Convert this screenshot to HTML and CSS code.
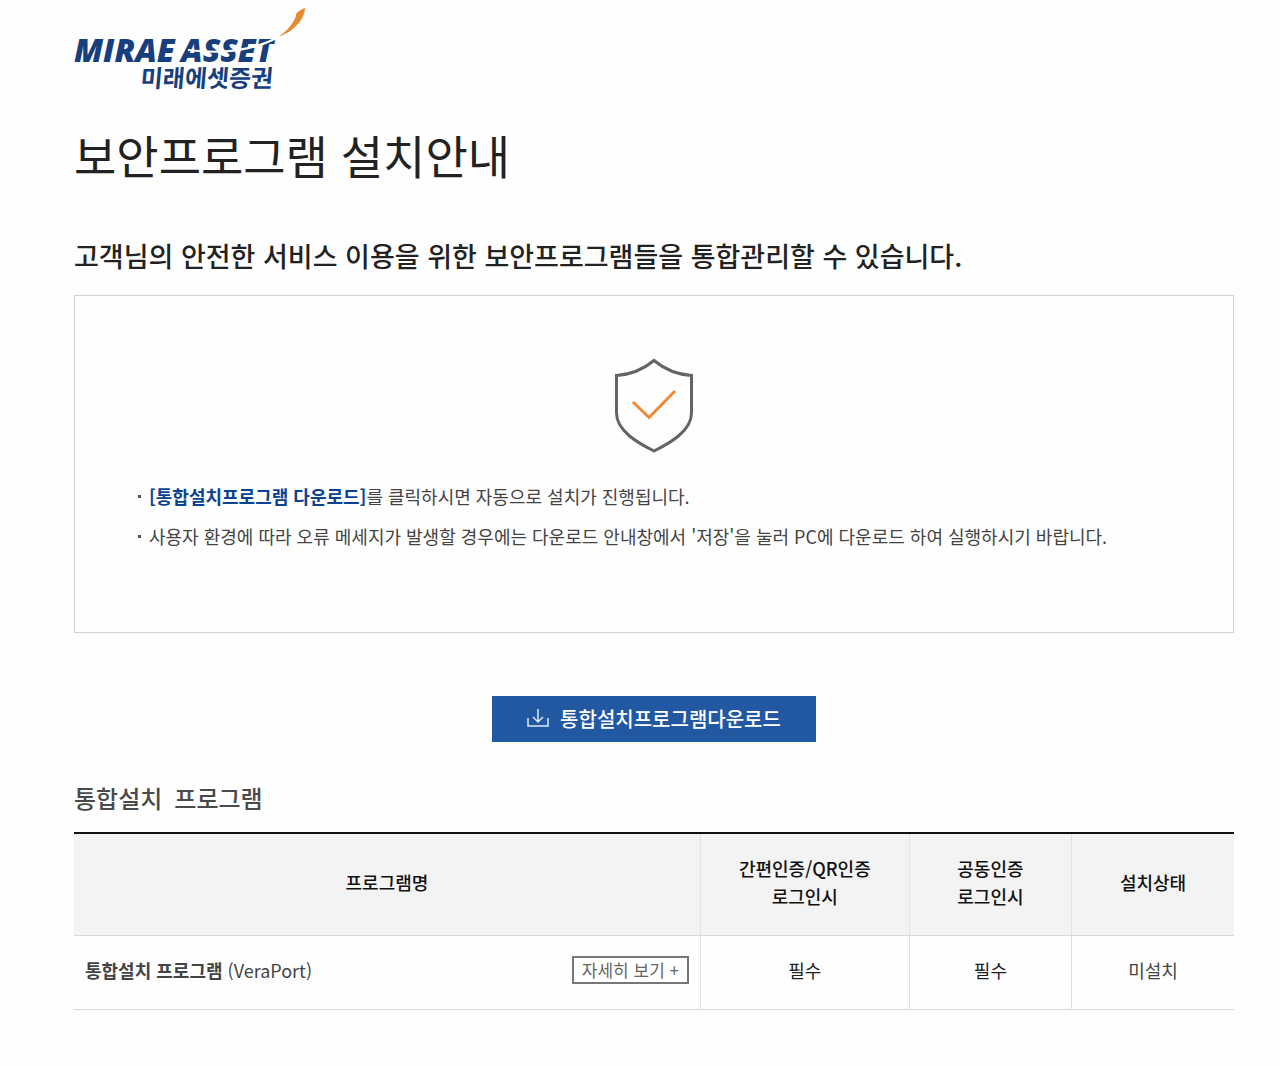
FILE: index.html
```html
<!DOCTYPE html>
<html lang="ko">
<head>
<meta charset="utf-8">
<meta name="viewport" content="width=device-width, initial-scale=1">
<title>보안프로그램 설치안내</title>
<link rel="stylesheet" href="styles.css">
</head>
<body>
<header class="site-header">
  <a class="logo" href="#" aria-label="미래에셋증권">
    <svg class="logo-art" width="240" height="88" viewBox="0 0 240 88" aria-hidden="true">
      <text class="logo-en" x="0" y="54">MIRAE</text>
      <text class="logo-en" x="107" y="54">ASSET</text>
      <text class="logo-ko" x="0" y="0" transform="translate(66 79) skewX(-5)">미래에셋증권</text>
      <path d="M114 42C145 46 178 43 205 29" fill="none" stroke="#fefefe" stroke-width="2"/>
      <path d="M205 28.500C213 23 219 16 222 8C221 5 226 2 231 0C231 10 221 23 205 28.500Z" fill="#e58b2f"/>
    </svg>
  </a>
</header>
<main>
  <h1 class="title">보안프로그램 설치안내</h1>
  <h2 class="lead">고객님의 안전한 서비스 이용을 위한 보안프로그램들을 통합관리할 수 있습니다.</h2>
  <section class="notice">
    <svg class="shield" width="80" height="96" viewBox="0 0 80 96" fill="none" stroke-width="3" aria-hidden="true">
      <path d="M40 2.500C31 10 17 16.500 2.500 17.500V55C2.500 73 24 85 40 93C56 85 77.500 73 77.500 55V17.500C63 16.500 49 10 40 2.500Z" stroke="#636466"/>
      <path d="M19 44L35 59.500L61 33" stroke="#ee8a35"/>
    </svg>
    <ul class="notice-list">
      <li><a class="notice-link" href="#">[통합설치프로그램 다운로드]</a>를 클릭하시면 자동으로 설치가 진행됩니다.</li>
      <li>사용자 환경에 따라 오류 메세지가 발생할 경우에는 다운로드 안내창에서 '저장'을 눌러 PC에 다운로드 하여 실행하시기 바랍니다.</li>
    </ul>
  </section>
  <button class="download" type="button">
    <svg width="22" height="20" viewBox="0 0 22 20" fill="none" stroke="#dce9fa" stroke-width="1.500" aria-hidden="true">
      <path d="M11 0V13M6 8L11 13L16 8M1 9V17H21V9"/>
    </svg>
    통합설치프로그램다운로드
  </button>
  <h3 class="section-title"><span>통합설치</span> <span>프로그램</span></h3>
  <table class="programs">
    <colgroup><col class="col-name"><col class="col-simple"><col class="col-joint"><col class="col-state"></colgroup>
    <thead>
      <tr><th scope="col">프로그램명</th><th scope="col">간편인증/QR인증<br>로그인시</th><th scope="col">공동인증<br>로그인시</th><th scope="col">설치상태</th></tr>
    </thead>
    <tbody>
      <tr>
        <td><div class="program"><span><strong>통합설치 프로그램</strong> (VeraPort)</span><button class="more" type="button">자세히 보기 +</button></div></td>
        <td class="required">필수</td><td class="required">필수</td><td>미설치</td>
      </tr>
    </tbody>
  </table>
</main>
</body>
</html>
```

FILE: styles.css
```css
* { box-sizing: border-box; }
body {
  margin: 0;
  padding: 8px 46px 56px 74px;
  background: #fefefe;
  color: #444;
  font: 18px/28px "Noto Sans CJK KR", sans-serif;
  word-break: keep-all;
}
h1, h2, h3, ul { margin: 0; padding: 0; }
button { font: inherit; cursor: pointer; }
.logo, .logo-art { display: block; width: 240px; }
.logo-art { overflow: visible; }
.logo-en {
  font: italic 800 32px "Open Sans", sans-serif;
  fill: #173f7d;
}
.logo-ko {
  font: 700 24px "Noto Sans CJK KR", sans-serif;
  fill: #173f7d;
}
.title {
  margin-top: 28px;
  color: #222;
  font-size: 46px;
  font-weight: 400;
  line-height: 60px;
}
.lead {
  margin-top: 52px;
  color: #222;
  font-size: 27px;
  font-weight: 500;
  line-height: 40px;
}
.notice {
  display: flex;
  flex-direction: column;
  gap: 28px;
  margin-top: 19px;
  padding: 62px 60px 82px;
  border: 1px solid #d4d4d4;
}
.shield { align-self: center; }
.notice-list {
  display: grid;
  gap: 12px;
  list-style: none;
}
.notice-list li { padding-left: 14px; position: relative; }
.notice-list li::before {
  position: absolute;
  top: 13px;
  left: 3px;
  width: 3px;
  height: 3px;
  background: #555;
  content: "";
}
.notice-link { color: #0a4391; font-weight: 700; text-decoration: none; }
.download {
  display: flex;
  align-items: center;
  justify-content: center;
  gap: 11px;
  width: 324px;
  height: 46px;
  margin: 63px auto 0;
  padding: 0;
  border: 0;
  background: #2257a1;
  color: #fff;
  font-size: 20px;
  font-weight: 500;
}
.section-title {
  display: flex;
  gap: 12px;
  margin-top: 40px;
  color: #4a4a4a;
  font-size: 24px;
  font-weight: 500;
  line-height: 32px;
}
.programs {
  width: 100%;
  margin-top: 18px;
  border-collapse: collapse;
  border-top: 2px solid #111;
  table-layout: fixed;
}
.col-name { width: 54%; }
.col-simple { width: 18%; }
.col-joint, .col-state { width: 14%; }
.programs th, .programs td {
  padding: 20px 11px 24px;
  border-bottom: 1px solid #d8d8d8;
  border-left: 1px solid #e2e2e2;
  text-align: center;
}
.programs th:first-child, .programs td:first-child { border-left: 0; }
.programs th {
  height: 102px;
  background: #f3f3f3;
  color: #111;
  font-weight: 500;
}
.programs td { height: 74px; }
.programs .required { color: #222; }
.program { display: flex; align-items: center; justify-content: space-between; }
.more {
  width: 117px;
  height: 28px;
  padding: 0;
  border: 2px solid #777;
  background: #fff;
  color: #666;
  font-size: 17px;
  line-height: 24px;
}
```
